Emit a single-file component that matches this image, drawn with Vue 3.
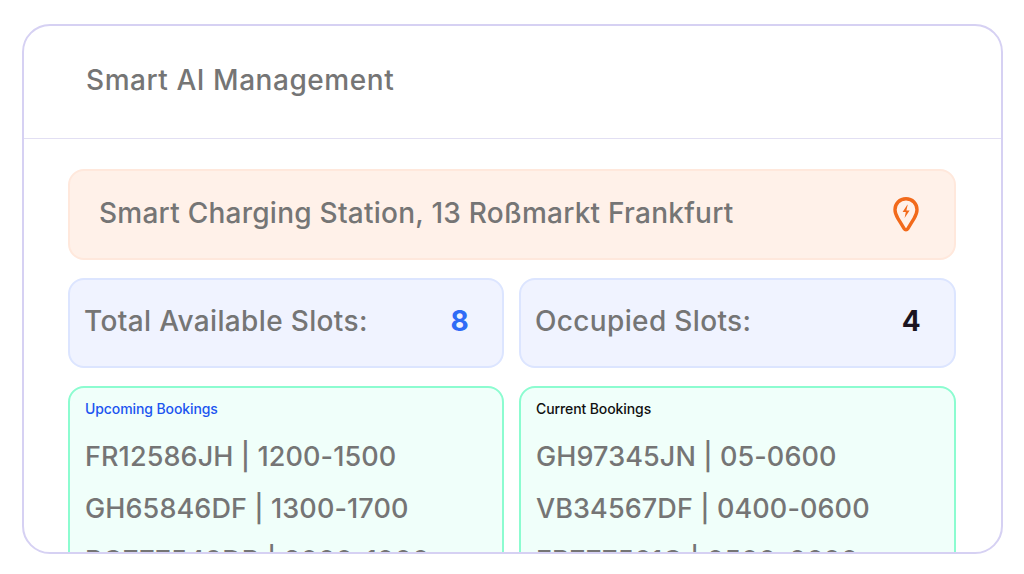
<script setup>
const upcoming = ['FR12586JH | 1200-1500', 'GH65846DF | 1300-1700', 'BG777549DB | 2000-1000']
const current = ['GH97345JN | 05-0600', 'VB34567DF | 0400-0600', 'FB777561G | 0500-0600']
</script>

<template>
  <div class="page">
    <div class="card">
      <header class="head">Smart AI Management</header>
      <div class="body">
        <div class="station">
          <span class="station-name">Smart Charging Station, 13 Roßmarkt Frankfurt</span>
          <svg class="pin" width="28" height="38" viewBox="0 0 28 38" fill="none">
            <path d="M14 2.800C7.500 2.800 3 7.800 3 13.800c0 3.200 1.300 6 3 8.800 2 3.300 4.500 7.300 6.300 10.300.8 1.300 2.600 1.300 3.400 0 1.800-3 4.300-7 6.300-10.300 1.700-2.800 3-5.600 3-8.800C25 7.800 20.500 2.800 14 2.800Z" stroke="#f26a1b" stroke-width="3.400" stroke-linejoin="round"/>
            <path d="M15.300 8.800 10.600 16h3.200l-1.200 6 5-7.600h-3.200l1.300-5.600Z" fill="#f26a1b"/>
          </svg>
        </div>
        <div class="cols">
          <div class="stat">
            <span>Total Available Slots:</span>
            <b class="num blue">8</b>
          </div>
          <div class="stat">
            <span>Occupied Slots:</span>
            <b class="num dark">4</b>
          </div>
        </div>
        <div class="cols">
          <div class="bookings">
            <div class="title blue-title">Upcoming Bookings</div>
            <div v-for="row in upcoming" :key="row" class="row">{{ row }}</div>
          </div>
          <div class="bookings">
            <div class="title">Current Bookings</div>
            <div v-for="row in current" :key="row" class="row">{{ row }}</div>
          </div>
        </div>
      </div>
    </div>
  </div>
</template>

<style>
html, body {
  margin: 0;
  background: #fff;
}
</style>

<style scoped>
.page {
  height: 574px;
  overflow: hidden;
  padding: 24px 21px 20px 22px;
  box-sizing: border-box;
  font-family: Inter, "Noto Sans", sans-serif;
  color: #757575;
}

.card {
  height: 530px;
  box-sizing: border-box;
  border: 2px solid #d6d1f3;
  border-radius: 28px;
  overflow: hidden;
  background: #fff;
}

.head {
  height: 113px;
  box-sizing: border-box;
  padding: 32px 62px 0;
  border-bottom: 1px solid #e2dff3;
  font-size: 28px;
  line-height: 44px;
  font-weight: 500;
  letter-spacing: 0.55px;
}

.body {
  padding: 30px 45px 0 44px;
  display: flex;
  flex-direction: column;
  gap: 18px;
}

.station {
  height: 91px;
  box-sizing: border-box;
  display: flex;
  align-items: center;
  justify-content: space-between;
  padding: 0 34px 0 29px;
  background: #fff1e9;
  border: 2px solid #ffe8dc;
  border-radius: 16px;
  font-size: 28px;
  font-weight: 500;
  letter-spacing: 0.25px;
}

.station-name {
  margin-bottom: 4px;
}

.cols {
  display: grid;
  grid-template-columns: 436px 437px;
  gap: 15px;
}

.stat {
  height: 90px;
  box-sizing: border-box;
  display: flex;
  align-items: center;
  justify-content: space-between;
  padding: 0 33px 4px 14px;
  background: #f0f3ff;
  border: 2px solid #dce5ff;
  border-radius: 16px;
  font-size: 28px;
  font-weight: 500;
  letter-spacing: 0.35px;
}

.num {
  font-weight: 700;
}

.blue {
  color: #2f6bf6;
}

.dark {
  color: #1b1420;
}

.bookings {
  height: 240px;
  box-sizing: border-box;
  padding: 11px 15px 0;
  background: #f0fffa;
  border: 2px solid #8cfcd0;
  border-radius: 16px;
}

.title {
  font-size: 14px;
  line-height: 20px;
  font-weight: 500;
  letter-spacing: -0.1px;
  color: #111;
  margin-bottom: 12px;
}

.blue-title {
  color: #1c55f0;
}

.row {
  font-size: 27px;
  line-height: 52px;
  font-weight: 500;
  letter-spacing: 0.1px;
  white-space: nowrap;
}
</style>
